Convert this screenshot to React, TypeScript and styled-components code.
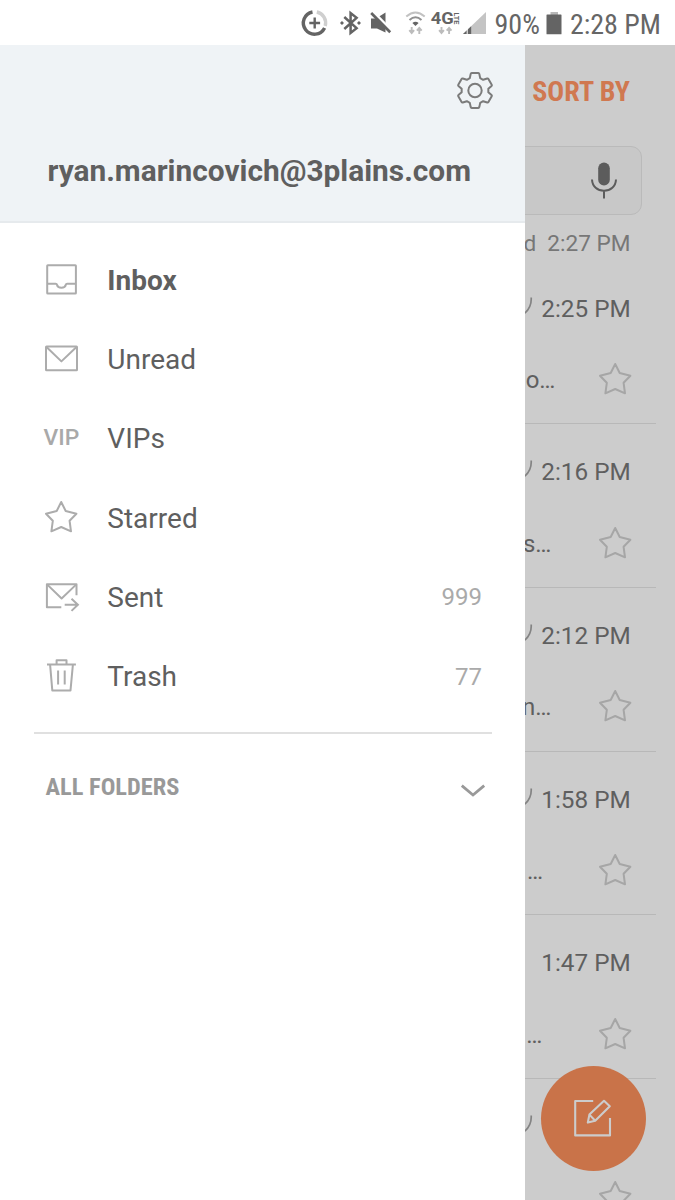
import React from "react";
import styled, { createGlobalStyle } from "styled-components";

const GlobalStyle = createGlobalStyle`
  * { box-sizing: border-box; }
  html, body { margin: 0; padding: 0; background: #fff; }
  body { font-family: Roboto, "Liberation Sans", sans-serif; color: #5f5f5f; overflow: hidden; }
  svg { display: block; flex: none; overflow: visible; }
`;

const Screen = styled.div`
  width: 675px;
  height: 1200px;
  display: flex;
  flex-direction: column;
  overflow: hidden;
`;

const StatusBar = styled.header`
  height: 45px;
  flex: none;
  display: flex;
  justify-content: flex-end;
  align-items: flex-start;
  padding-right: 14px;
  background: #fff;
`;

const Condensed = styled.span<{ $size: number; $bold?: boolean; $color: string }>`
  font-family: "Roboto Condensed", Roboto, sans-serif;
  font-size: ${(p) => p.$size}px;
  font-weight: ${(p) => (p.$bold ? 700 : 400)};
  color: ${(p) => p.$color};
  white-space: nowrap;
`;

const StatusText = styled(Condensed)`
  line-height: 49px;
`;

const Stage = styled.main`
  position: relative;
  flex: 1;
  min-height: 0;
  display: flex;
`;

const Drawer = styled.nav`
  width: 525.4px;
  flex: none;
  background: #fff;
`;

const DrawerHeader = styled.div`
  height: 178px;
  padding: 26px 30.5px 0 47.5px;
  display: flex;
  flex-direction: column;
  background: #eff3f6;
  border-bottom: 2px solid #e6eaed;
`;

const SettingsSlot = styled.div`
  display: flex;
  justify-content: flex-end;
  height: 80px;
`;

const Account = styled.div`
  font-size: 29.85px;
  font-weight: 700;
  line-height: 40px;
  white-space: nowrap;
`;

const FolderList = styled.ul`
  list-style: none;
  margin: 0;
  padding: 18px 43.5px 0 41px;
`;

const FolderRow = styled.li`
  height: 79.2px;
  display: flex;
  align-items: center;
`;

const FolderLabel = styled.span<{ $active?: boolean }>`
  flex: 1;
  margin-left: 26.3px;
  font-size: 28px;
  font-weight: ${(p) => (p.$active ? 700 : 400)};
`;

const Count = styled.span`
  font-size: 24px;
  color: #aaa;
`;

const VipMark = styled.span`
  width: 40px;
  padding-left: 2.5px;
  font-size: 22.8px;
  font-weight: 500;
  color: #a9a9a9;
  line-height: 36px;
  padding-bottom: 2px;
`;

const Divider = styled.hr`
  border: 0;
  height: 2px;
  margin: 16px 33px 0 34px;
  background: #e0e0e0;
`;

const AllFolders = styled.div`
  display: flex;
  justify-content: space-between;
  align-items: center;
  height: 40px;
  margin: 32px 39.5px 0 45.5px;
`;

const ChevronSlot = styled.span`
  padding-top: 9px;
`;

const Inbox = styled.section`
  flex: 1;
  min-width: 0;
  overflow: hidden;
  display: flex;
  flex-direction: column;
  background: #ccc;
`;

const SortBar = styled.div`
  height: 101px;
  flex: none;
  padding: 27px 45px 0 0;
  display: flex;
  justify-content: flex-end;
  line-height: 40px;
`;

const SearchBox = styled.div`
  height: 69px;
  flex: none;
  margin: 0 33px 0 -20px;
  padding: 15px 24px 0 0;
  display: flex;
  justify-content: flex-end;
  border: 1px solid #bababa;
  border-radius: 11px;
  background: #c8c8c8;
`;

const Updated = styled.div`
  height: 45.5px;
  flex: none;
  padding: 13px 44.5px 0 0;
  font-size: 22.6px;
  line-height: 32px;
  color: #777;
  white-space: pre;
  display: flex;
  justify-content: flex-end;
`;

const MessageRow = styled.article`
  height: 163.7px;
  flex: none;
  margin-right: 19px;
  padding-top: 32px;
  display: flex;
  flex-direction: column;
  gap: 35.4px;
  border-bottom: 1px solid #b8b8b8;
`;

const TimeLine = styled.div`
  height: 32px;
  padding-right: 25.3px;
  display: flex;
  align-items: center;
  justify-content: space-between;
  font-size: 24.3px;
  line-height: 32px;
  white-space: nowrap;
`;

const PreviewLine = styled.div`
  height: 40px;
  padding-right: 21px;
  display: flex;
  align-items: center;
  justify-content: space-between;
`;

const Preview = styled.span<{ $end: number }>`
  width: ${(p) => p.$end}px;
  display: flex;
  justify-content: flex-end;
  font-size: 24px;
  line-height: 40px;
  white-space: pre;
`;

const Compose = styled.button`
  position: absolute;
  left: 540.6px;
  top: 1020.6px;
  width: 105px;
  height: 105px;
  padding: 0;
  border: 0;
  border-radius: 50%;
  display: flex;
  align-items: center;
  justify-content: center;
  background: #c97349;
`;

const line = {
  fill: "none",
  stroke: "#acacac",
  strokeWidth: 2,
  strokeLinejoin: "round" as const,
  strokeLinecap: "butt" as const,
};

const InboxIcon = () => (
  <svg width="40" height="40" {...line}>
    <rect x="6.2" y="4.2" width="28.7" height="28.4" rx="0.6" />
    <path d="M6.2 22.7H14.6Q15.8 22.7 16 23.8Q16.6 26.8 20.4 26.8Q24.2 26.8 24.8 23.8Q25 22.7 26.2 22.7H34.9" />
  </svg>
);

const MailIcon = () => (
  <svg width="40" height="40" {...line}>
    <rect x="5" y="6.5" width="31" height="23.8" rx="0.5" />
    <path d="M5.5 7L20.4 21.4L35.5 7" />
  </svg>
);

const starPath =
  "M20.2 4L24.7 13L35.4 15.7L28.6 22.8L30 33.3L20.2 29L10.4 33.3L11.8 22.8L5 15.7L15.7 13Z";

const StarIcon = ({ color = "#acacac" }: { color?: string }) => (
  <svg width="40" height="40" {...line} stroke={color}>
    <path d={starPath} />
  </svg>
);

const SentIcon = () => (
  <svg width="40" height="40" {...line}>
    <path d="M20.3 30.2H5.9V7.2H35.5V18.2" />
    <path d="M6.3 7.6L20.6 21.5L35.1 7.6" />
    <path d="M23.7 27.7H36.5M30.5 21.7L36.9 27.7L30.5 33.9" strokeLinejoin="miter" />
  </svg>
);

const TrashIcon = () => (
  <svg width="40" height="40" {...line}>
    <path d="M6 7.6H34.9M15.6 7.6V3.3H25.5V7.6M9.1 7.6L11.3 33.4H29.5L31.9 7.6M17.1 13.4V27.4M23.7 13.4V27.4" />
  </svg>
);

const gearPath = Array.from({ length: 6 }, (_, i) => {
  const a = (i * Math.PI) / 3;
  const at = (x: number, y: number) =>
    `${(x * Math.cos(a) - y * Math.sin(a)).toFixed(2)} ${(x * Math.sin(a) + y * Math.cos(a)).toFixed(2)}`;
  return `${i ? "L" : "M"}${at(-5.2, -12.4)}L${at(-4.3, -16.6)}Q${at(-4.1, -17.4)} ${at(-3.3, -17.4)}L${at(3.3, -17.4)}Q${at(4.1, -17.4)} ${at(4.3, -16.6)}L${at(5.2, -12.4)}`;
}).join("") + "Z";

const GearIcon = () => (
  <svg width="40" height="40" viewBox="-20 -19.5 40 40" fill="none" stroke="#7b7b7b" strokeWidth="2" strokeLinejoin="round">
    <path d={gearPath} />
    <circle r="6.7" />
  </svg>
);

const ChevronIcon = () => (
  <svg width="26" height="14" fill="none" stroke="#999" strokeWidth="2.8">
    <path d="M1.8 1.6L13 11L24.2 1.6" />
  </svg>
);

const MicIcon = () => (
  <svg width="26" height="37" fill="none" stroke="#5c5c5c" strokeWidth="2">
    <rect x="7.2" y="0.5" width="11.6" height="23" rx="5.8" fill="#5c5c5c" stroke="none" />
    <path d="M1 17.5C1.3 24.5 6.5 28.8 13 28.8S24.7 24.5 25 17.5M13 28.8V36.5" />
  </svg>
);

const ClipTail = ({ show }: { show: boolean }) => (
  <svg width="9" height="32" fill="none" stroke={show ? "#838383" : "none"} strokeWidth="1.7">
    <path d="M6.2 4.5C6.6 11 4.4 16 -0.2 20.2" />
  </svg>
);

const ComposeIcon = () => (
  <svg width="40" height="40" fill="none" stroke="#ccc" strokeWidth="2.1" strokeLinejoin="round">
    <path d="M20.2 3H2.2V37.4H37V20" />
    <path d="M14.8 24.6L16.4 16.6L31 2.8L36.8 8.2L22.2 22.8ZM16.4 16.6L22.2 22.8" />
  </svg>
);

const StatusIcons = () => (
  <svg width="198.4" height="45" viewBox="296 0 198.4 45" fill="none">
    <path d="M312.5 12A11.2 11.2 0 1 0 324.6 28" stroke="#646464" strokeWidth="3.4" />
    <path d="M316.8 12A11.2 11.2 0 0 1 325.2 26" stroke="#cfcfcf" strokeWidth="3.4" />
    <path d="M309.3 23H320.1M314.7 17.6V28.4" stroke="#646464" strokeWidth="2.4" />
    <path d="M344.3 17L356.6 28.2L350.6 33V13L356.6 17.8L344.3 29" stroke="#646464" strokeWidth="2.5" />
    <path d="M342 21L344 23L342 25L340 23ZM359 21L361 23L359 25L357 23Z" fill="#646464" />
    <path d="M371 18.5H376L385.5 12.5V32.5L377 28.5H371Z" fill="#646464" />
    <path d="M373 11.5L393 32" stroke="#fff" strokeWidth="2.6" />
    <path d="M371.2 13L390.2 32.2" stroke="#646464" strokeWidth="2.7" />
    <path d="M406.3 16.5Q415.5 8.5 424.7 16.5" stroke="#c2c2c2" strokeWidth="2" />
    <path d="M409.5 20Q415.5 14.6 421.5 20" stroke="#909090" strokeWidth="2" />
    <path d="M412.4 23Q415.5 20.3 418.6 23L415.5 26Z" fill="#646464" />
    <path d="M411.7 27V32M409.3 30.2L411.7 33L414.1 30.2M419.3 34V29M416.9 30.7L419.3 27.9L421.7 30.7" stroke="#bcbcbc" strokeWidth="1.9" />
    <path d="M441.5 27V32M439.1 30.2L441.5 33L443.9 30.2M449.1 34V29M446.7 30.7L449.1 27.9L451.5 30.7" stroke="#bcbcbc" strokeWidth="1.9" />
    <text x="430.8" y="24" fontSize="15.8" fontWeight="700" fill="#646464" textLength="23" lengthAdjust="spacingAndGlyphs">4G</text>
    <text transform="translate(454.3 12.5) rotate(90)" fontSize="6.8" fontWeight="700" fill="#646464" textLength="12" lengthAdjust="spacingAndGlyphs">LTE</text>
    <path d="M463 34L486 12V34Z" fill="#c4c4c4" />
    <path d="M463 34L471.2 26.2V34Z" fill="#646464" />
    <path d="M467.2 28V34" stroke="#fff" strokeWidth="1" />
  </svg>
);

const BatteryIcon = () => (
  <svg width="30" height="45" viewBox="540.5 0 30 45">
    <path d="M551 12H558.5V15H551Z" fill="#b8b8b8" />
    <rect x="547" y="14.5" width="15" height="19.8" rx="0.6" fill="#646464" />
  </svg>
);

type Folder = { label: string; icon: React.ReactNode; count?: string; active?: boolean };

const folders: Folder[] = [
  { label: "Inbox", icon: <InboxIcon />, active: true },
  { label: "Unread", icon: <MailIcon /> },
  { label: "VIPs", icon: <VipMark>VIP</VipMark> },
  { label: "Starred", icon: <StarIcon /> },
  { label: "Sent", icon: <SentIcon />, count: "999" },
  { label: "Trash", icon: <TrashIcon />, count: "77" },
];

const messages = [
  { time: "2:25 PM", preview: "o…", end: 30, clip: true },
  { time: "2:16 PM", preview: "s…", end: 26, clip: true },
  { time: "2:12 PM", preview: "n…", end: 26, clip: true },
  { time: "1:58 PM", preview: "…", end: 17.6, clip: true },
  { time: "1:47 PM", preview: "…", end: 16.8, clip: false },
  { time: "", preview: "", end: 17, clip: true },
];

export default function App() {
  return (
    <Screen>
      <GlobalStyle />
      <StatusBar>
        <StatusIcons />
        <StatusText $size={28} $color="#666">90%</StatusText>
        <BatteryIcon />
        <StatusText $size={28} $color="#666">2:28 PM</StatusText>
      </StatusBar>
      <Stage>
        <Drawer>
          <DrawerHeader>
            <SettingsSlot><GearIcon /></SettingsSlot>
            <Account>ryan.marincovich@3plains.com</Account>
          </DrawerHeader>
          <FolderList>
            {folders.map((f) => (
              <FolderRow key={f.label}>
                {f.icon}
                <FolderLabel $active={f.active}>{f.label}</FolderLabel>
                {f.count && <Count>{f.count}</Count>}
              </FolderRow>
            ))}
          </FolderList>
          <Divider />
          <AllFolders>
            <Condensed $size={24.4} $bold $color="#999">ALL FOLDERS</Condensed>
            <ChevronSlot><ChevronIcon /></ChevronSlot>
          </AllFolders>
        </Drawer>
        <Inbox>
          <SortBar>
            <Condensed $size={28} $bold $color="#d07850">SORT BY</Condensed>
          </SortBar>
          <SearchBox><MicIcon /></SearchBox>
          <Updated>d  2:27 PM</Updated>
          {messages.map((m, i) => (
            <MessageRow key={i}>
              <TimeLine>
                <ClipTail show={m.clip} />
                <span>{m.time}</span>
              </TimeLine>
              <PreviewLine>
                <Preview $end={m.end}>{m.preview}</Preview>
                <StarIcon color="#a6a6a6" />
              </PreviewLine>
            </MessageRow>
          ))}
        </Inbox>
        <Compose aria-label="Compose"><ComposeIcon /></Compose>
      </Stage>
    </Screen>
  );
}
